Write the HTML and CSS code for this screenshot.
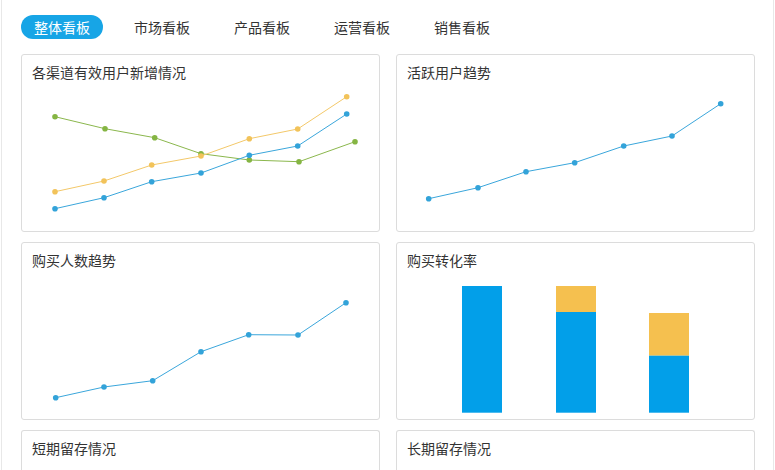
FILE: index.html
```html
<!DOCTYPE html>
<html lang="zh-CN">
<head>
<meta charset="utf-8">
<title>看板</title>
<link rel="stylesheet" href="styles.css">
</head>
<body>
<div class="frame">
  <nav class="tabs">
    <span class="tab active">整体看板</span>
    <span class="tab">市场看板</span>
    <span class="tab">产品看板</span>
    <span class="tab">运营看板</span>
    <span class="tab">销售看板</span>
  </nav>
  <div class="grid">
    <section class="card">
      <h3 class="card-title">各渠道有效用户新增情况</h3>
      <svg class="chart" width="357" height="147" viewBox="22 82 357 147">
        <g class="line green">
          <polyline points="55,116.7 105,128.7 154.7,137.7 201,153.7 249.3,160 299,161.7 355,141.7"/>
          <circle cx="55" cy="116.7" r="2.8"/><circle cx="105" cy="128.7" r="2.8"/><circle cx="154.7" cy="137.7" r="2.8"/><circle cx="201" cy="153.7" r="2.8"/><circle cx="249.3" cy="160" r="2.8"/><circle cx="299" cy="161.7" r="2.8"/><circle cx="355" cy="141.7" r="2.8"/>
        </g>
        <g class="line yellow">
          <polyline points="55,191.7 104,181 151.7,165 201,156 249.3,138.7 297.7,129 346.7,96.7"/>
          <circle cx="55" cy="191.7" r="2.8"/><circle cx="104" cy="181" r="2.8"/><circle cx="151.7" cy="165" r="2.8"/><circle cx="201" cy="156" r="2.8"/><circle cx="249.3" cy="138.7" r="2.8"/><circle cx="297.7" cy="129" r="2.8"/><circle cx="346.7" cy="96.7" r="2.8"/>
        </g>
        <g class="line blue">
          <polyline points="55,208.7 104,197.7 151.7,181.7 201,173 249.3,155.3 297.7,146 346.7,114"/>
          <circle cx="55" cy="208.7" r="2.8"/><circle cx="104" cy="197.7" r="2.8"/><circle cx="151.7" cy="181.7" r="2.8"/><circle cx="201" cy="173" r="2.8"/><circle cx="249.3" cy="155.3" r="2.8"/><circle cx="297.7" cy="146" r="2.8"/><circle cx="346.7" cy="114" r="2.8"/>
        </g>
      </svg>
    </section>
    <section class="card">
      <h3 class="card-title">活跃用户趋势</h3>
      <svg class="chart" width="357" height="147" viewBox="397 82 357 147">
        <g class="line blue">
          <polyline points="428.7,198.7 478,187.7 526,171.7 574.7,162.7 623.7,146 672,136 720.7,103.7"/>
          <circle cx="428.7" cy="198.7" r="2.8"/><circle cx="478" cy="187.7" r="2.8"/><circle cx="526" cy="171.7" r="2.8"/><circle cx="574.7" cy="162.7" r="2.8"/><circle cx="623.7" cy="146" r="2.8"/><circle cx="672" cy="136" r="2.8"/><circle cx="720.7" cy="103.7" r="2.8"/>
        </g>
      </svg>
    </section>
    <section class="card">
      <h3 class="card-title">购买人数趋势</h3>
      <svg class="chart" width="357" height="147" viewBox="22 270 357 147">
        <g class="line blue">
          <polyline points="55.7,397.7 104,387 152.7,380.7 201,351.7 248.7,334.7 298,335 346,302.7"/>
          <circle cx="55.7" cy="397.7" r="2.8"/><circle cx="104" cy="387" r="2.8"/><circle cx="152.7" cy="380.7" r="2.8"/><circle cx="201" cy="351.7" r="2.8"/><circle cx="248.7" cy="334.7" r="2.8"/><circle cx="298" cy="335" r="2.8"/><circle cx="346" cy="302.7" r="2.8"/>
        </g>
      </svg>
    </section>
    <section class="card">
      <h3 class="card-title">购买转化率</h3>
      <svg class="chart" width="357" height="147" viewBox="397 270 357 147">
        <rect class="bar-blue" x="462" y="286" width="40" height="126.7"/>
        <rect class="bar-yellow" x="556" y="286" width="40" height="26"/>
        <rect class="bar-blue" x="556" y="312" width="40" height="100.7"/>
        <rect class="bar-yellow" x="649" y="313" width="40" height="42.7"/>
        <rect class="bar-blue" x="649" y="355.7" width="40" height="57"/>
      </svg>
    </section>
    <section class="card cut">
      <h3 class="card-title">短期留存情况</h3>
    </section>
    <section class="card cut">
      <h3 class="card-title">长期留存情况</h3>
    </section>
  </div>
</div>
</body>
</html>
```
FILE: styles.css
```css
html, body {
  margin: 0;
  padding: 0;
  overflow: hidden;
  background: #fff;
}
body {
  font-family: "Noto Sans CJK SC", "Noto Sans", sans-serif;
  color: #333;
  width: 775px;
  height: 470px;
}
.frame {
  box-sizing: border-box;
  margin-left: 1px;
  width: 773px;
  height: 470px;
  border-left: 1px solid #e8e8e8;
  border-right: 1px solid #e8e8e8;
  padding: 15px 0 0 19px;
}
.tabs {
  display: flex;
  gap: 18px;
  height: 24px;
}
.tab {
  display: block;
  height: 24px;
  line-height: 24px;
  padding: 0 13px;
  font-size: 14px;
  border-radius: 12px;
  color: #333;
}
.tab.active {
  background: #17a5e6;
  color: #fff;
}
.grid {
  margin-top: 15px;
  display: grid;
  grid-template-columns: 359px 359px;
  grid-template-rows: 178px 178px 40px;
  column-gap: 16px;
  row-gap: 10px;
}
.card {
  box-sizing: border-box;
  border: 1px solid #dcdcdc;
  border-radius: 3px;
  background: #fff;
  overflow: hidden;
}
.card.cut {
  border-bottom: none;
  border-radius: 3px 3px 0 0;
}
.card-title {
  margin: 0;
  padding: 7px 0 0 10px;
  height: 20px;
  line-height: 20px;
  font-size: 14px;
  font-weight: normal;
  color: #333;
}
.chart {
  display: block;
}
.line polyline {
  fill: none;
  stroke-width: 1;
}
.line.green polyline { stroke: #8bb74d; }
.line.green circle { fill: #85b543; }
.line.yellow polyline { stroke: #f3c869; }
.line.yellow circle { fill: #f2c35a; }
.line.blue polyline { stroke: #3aa6db; }
.line.blue circle { fill: #33a3d9; }
.bar-blue { fill: #029fe9; }
.bar-yellow { fill: #f5c04f; }
```
